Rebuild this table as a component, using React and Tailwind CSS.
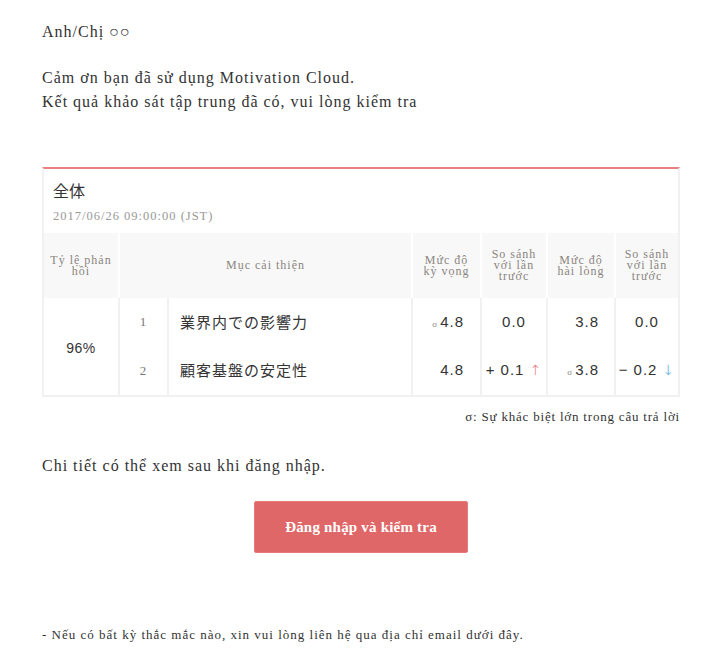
import React from "react";

const serif = "font-['Liberation_Serif','Noto_Sans_CJK_JP',serif]";

function Sigma() {
  return (
    <span className="mr-[3px] text-[9px] text-[#888] font-['Liberation_Serif',serif] tracking-normal">σ</span>
  );
}

export default function App() {
  const th = `bg-[#f8f8f8] text-[#8a8580] text-[12px] leading-[11px] tracking-[1px] font-normal align-middle text-center ${serif}`;
  const num = "font-['Liberation_Sans',Arial,sans-serif] text-[15px] tracking-[1px] text-[#333] align-middle";
  return (
    <div className={`bg-white min-h-[664px] pl-[42px] pr-[44px] pt-[20px] text-[#333] ${serif} tracking-[1px]`}>
      <p className="text-[16px] leading-[24px]">Anh/Chị ○○</p>
      <p className="text-[16px] leading-[24px] mt-[22px]">
        Cảm ơn bạn đã sử dụng Motivation Cloud.
        <br />
        Kết quả khảo sát tập trung đã có, vui lòng kiểm tra
      </p>

      <div className="mt-[53px] w-[638px] border-2 border-[#f1f1f1] border-t-2 border-t-[#e88080]">
        <div className="px-[9px] pt-[9px] pb-[8px]">
          <div className="text-[16px] leading-[24px] text-[#333] font-['Noto_Sans_CJK_JP',sans-serif] tracking-normal">全体</div>
          <div className="text-[12.5px] leading-[18px] text-[#999] mt-[5px]">2017/06/26 09:00:00 (JST)</div>
        </div>
        <table className="w-full table-fixed border-collapse">
          <colgroup>
            <col className="w-[75px]" />
            <col className="w-[49px]" />
            <col className="w-[244px]" />
            <col className="w-[69px]" />
            <col className="w-[66px]" />
            <col className="w-[68px]" />
            <col />
          </colgroup>
          <thead>
            <tr className="h-[65px]">
              <th className={`${th} px-0`}>Tỷ lệ phản hồi</th>
              <th colSpan={2} className={`${th} px-2 border-l-2 border-white`}>Mục cải thiện</th>
              <th className={`${th} px-2 border-l-2 border-white`}>Mức độ kỳ vọng</th>
              <th className={`${th} px-2 border-l-2 border-white`}>So sánh với lần trước</th>
              <th className={`${th} px-2 border-l-2 border-white`}>Mức độ hài lòng</th>
              <th className={`${th} px-2 border-l-2 border-white`}>So sánh với lần trước</th>
            </tr>
          </thead>
          <tbody>
            <tr className="h-[48px]">
              <td rowSpan={2} className="pt-[4px] text-center align-middle font-['Liberation_Sans',Arial,sans-serif] text-[14px] tracking-[0.5px] text-[#333]">96%</td>
              <td className={`border-l-2 border-[#f1f1f1] text-center text-[13px] text-[#777] align-middle ${serif}`}>1</td>
              <td className="border-l-2 border-[#f1f1f1] pl-[11px] align-middle text-[15px] text-[#333] font-['Noto_Sans_CJK_JP',sans-serif]">業界内での影響力</td>
              <td className={`border-l-2 border-[#f1f1f1] text-right pr-[16px] ${num}`}><Sigma />4.8</td>
              <td className={`border-l-2 border-[#f1f1f1] text-center ${num}`}>0.0</td>
              <td className={`border-l-2 border-[#f1f1f1] text-right pr-[15px] ${num}`}>3.8</td>
              <td className={`border-l-2 border-[#f1f1f1] text-center ${num}`}>0.0</td>
            </tr>
            <tr className="h-[49px]">
              <td className={`border-l-2 border-[#f1f1f1] text-center text-[13px] text-[#777] align-middle ${serif}`}>2</td>
              <td className="border-l-2 border-[#f1f1f1] pl-[11px] align-middle text-[15px] text-[#333] font-['Noto_Sans_CJK_JP',sans-serif]">顧客基盤の安定性</td>
              <td className={`border-l-2 border-[#f1f1f1] text-right pr-[16px] ${num}`}>4.8</td>
              <td className={`border-l-2 border-[#f1f1f1] text-center ${num}`}>
                + 0.1 <span className="text-[#e57373] font-['DejaVu_Sans',sans-serif] text-[14px] font-light">↑</span>
              </td>
              <td className={`border-l-2 border-[#f1f1f1] text-right pr-[15px] ${num}`}><Sigma />3.8</td>
              <td className={`border-l-2 border-[#f1f1f1] text-center ${num}`}>
                − 0.2 <span className="text-[#4aa3df] font-['DejaVu_Sans',sans-serif] text-[14px] font-light">↓</span>
              </td>
            </tr>
          </tbody>
        </table>
      </div>

      <p className="w-[638px] text-right text-[13px] leading-[18px] mt-[11px] text-[#333] tracking-[0.8px]">σ: Sự khác biệt lớn trong câu trả lời</p>

      <p className="text-[16px] leading-[24px] mt-[28px]">Chi tiết có thể xem sau khi đăng nhập.</p>

      <div className="w-[638px] flex justify-center mt-[23px]">
        <button className="w-[214px] h-[52px] bg-[#df6767] border border-[#e87a7a] rounded-[2px] text-white font-bold text-[15px] tracking-[0.2px]">
          Đăng nhập và kiểm tra
        </button>
      </div>

      <p className="text-[13px] leading-[18px] mt-[73px] text-[#333]">- Nếu có bất kỳ thắc mắc nào, xin vui lòng liên hệ qua địa chỉ email dưới đây.</p>
    </div>
  );
}
